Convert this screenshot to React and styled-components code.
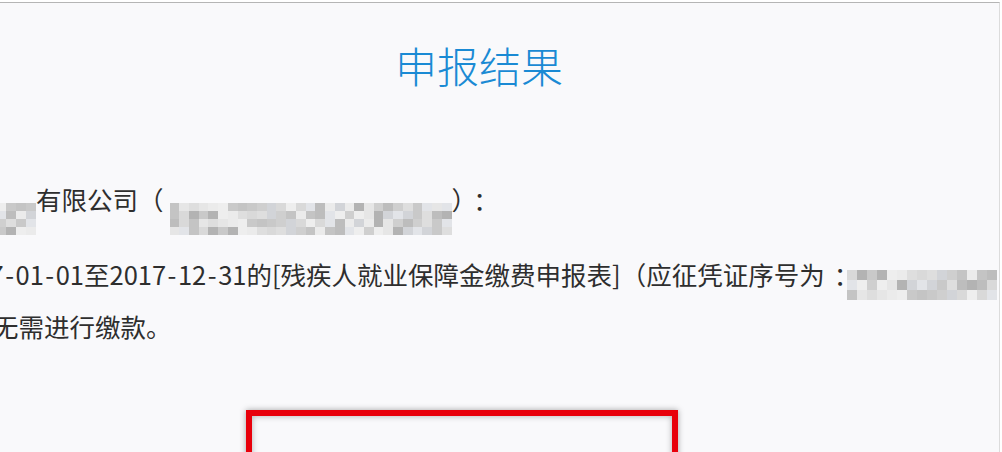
import React from "react";
import styled, { createGlobalStyle } from "styled-components";

const GlobalStyle = createGlobalStyle`
  html, body {
    margin: 0;
    padding: 0;
    background: #ffffff;
    overflow: hidden;
  }
  body {
    font-family: "Noto Sans CJK SC", "Noto Sans", sans-serif;
  }
`;

// grey shades used for the blurred (pixelated) parts of the screenshot
const SHADES = [
  "#d9d9d9", "#c9c9c9", "#e6e6e6", "#bdbdbd", "#d2d4d8", "#eeeeee",
  "#c4c4c4", "#dedede", "#b3b3b3", "#e2e4e8", "#cfcfcf", "#ebebeb",
];

function Mosaic({ width, height = 30, cell = 10, seed = 1, shift = 0 }) {
  const cols = Math.ceil(width / cell);
  const rows = Math.ceil(height / cell);
  const cells = [];
  for (let i = 0; i < cols * rows; i++) {
    const idx = (i * 7 + seed * 5 + ((i * i + seed) % 5)) % SHADES.length;
    cells.push(<MosaicCell key={i} $color={SHADES[idx]} />);
  }
  return (
    <MosaicBox
      style={{ width, height, gridTemplateColumns: `repeat(${cols}, 1fr)`, verticalAlign: shift }}
      $rows={rows}
    >
      {cells}
    </MosaicBox>
  );
}

// dates: the hyphens in the reference font are wider than in ours
function DateText({ value }) {
  const parts = value.split("-");
  return parts.map((part, i) => (
    <React.Fragment key={i}>
      {i > 0 && <Dash>-</Dash>}
      {part}
    </React.Fragment>
  ));
}

export default function App() {
  return (
    <>
      <GlobalStyle />
      <Page>
        <Card>
          <Title>申报结果</Title>
          <Text>
            <Line>
              <Mosaic width={89} height={32} seed={3} shift={-1} />
              有限公司（
              <Mosaic width={282} height={32} seed={1} shift={-1} />
              ）<Colon>：</Colon>
            </Line>
            <Paragraph>
              <Line>
                <DateText value="2017-01-01" />至<DateText value="2017-12-31" />
                的[残疾人就业保障金缴费申报表]（应征凭证序号为<Colon>：</Colon>
                <Mosaic width={150} seed={2} shift={5} />
              </Line>
              <Line $indent={46}>无需进行缴款。</Line>
            </Paragraph>
          </Text>
          <Highlight />
        </Card>
      </Page>
    </>
  );
}

const Page = styled.div`
  width: 1002px;
  height: 452px;
  padding-top: 2px;
  box-sizing: border-box;
  overflow: hidden;
`;

const Card = styled.div`
  margin-left: -53px;
  width: 1053px;
  height: 470px;
  box-sizing: border-box;
  background: #f9f9fb;
  border-top: 1px solid #b5b5b5;
  border-right: 1px solid #dcdcdc;
`;

const Title = styled.h1`
  margin: 41px 0 0;
  padding-left: 12px;
  font-size: 42px;
  line-height: 42px;
  font-weight: 300;
  text-align: center;
  color: #1a8ad4;
`;

const Text = styled.div`
  margin-top: 87px;
  color: #2e2e2e;
  font-size: 25.5px;
`;

const Paragraph = styled.div`
  margin-top: 23px;
`;

const Line = styled.div`
  height: 52px;
  line-height: 52px;
  white-space: nowrap;
  text-indent: ${(p) => p.$indent || 0}px;
`;

const Dash = styled.span`
  padding: 0 1.5px;
`;

// full-width colon: the reference font centres it in its box
const Colon = styled.span`
  padding-left: 0.35em;
  margin-right: -0.7em;
`;

const MosaicBox = styled.span`
  display: inline-grid;
  grid-template-rows: repeat(${(p) => p.$rows}, 1fr);
  margin-left: 6px;
  text-indent: 0;
  overflow: hidden;

  &:first-child {
    margin-left: 0;
  }
`;

const MosaicCell = styled.span`
  background: ${(p) => p.$color};
`;

const Highlight = styled.div`
  margin: 58px 0 0 299px;
  width: 432px;
  height: 110px;
  box-sizing: border-box;
  border: 6px solid #e8000b;
  box-shadow: 0 0 6px rgba(0, 0, 0, 0.35), inset 0 0 6px rgba(0, 0, 0, 0.3);
`;
